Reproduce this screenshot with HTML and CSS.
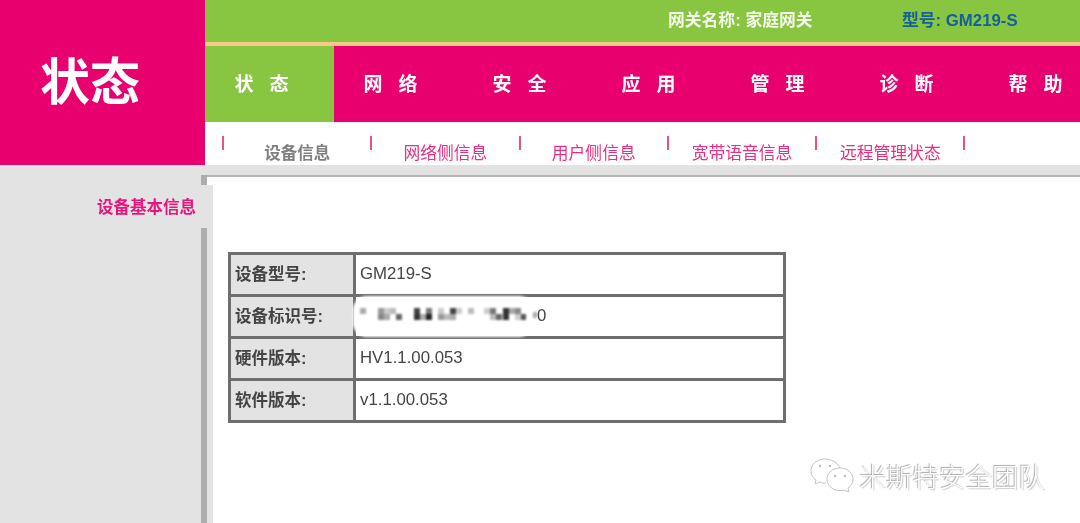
FILE: index.html
```html
<!DOCTYPE html>
<html lang="zh-CN">
<head>
  <meta charset="UTF-8" />
  <title>状态</title>
  <link rel="stylesheet" href="styles.css">
</head>
<body>
  <div class="page">
    <header class="header">
      <div class="logo">状态</div>
      <div class="header-right">
        <div class="topbar">
          <span class="gateway">网关名称: 家庭网关</span>
          <span class="model">型号: GM219-S</span>
        </div>
        <nav class="nav">
          <a class="nav-item active">状态</a>
          <a class="nav-item">网络</a>
          <a class="nav-item">安全</a>
          <a class="nav-item">应用</a>
          <a class="nav-item">管理</a>
          <a class="nav-item">诊断</a>
          <a class="nav-item">帮助</a>
        </nav>
        <div class="subnav">
          <i class="sep"></i><a class="sub-item current">设备信息</a>
          <i class="sep"></i><a class="sub-item">网络侧信息</a>
          <i class="sep"></i><a class="sub-item">用户侧信息</a>
          <i class="sep"></i><a class="sub-item">宽带语音信息</a>
          <i class="sep"></i><a class="sub-item">远程管理状态</a>
          <i class="sep"></i>
        </div>
      </div>
    </header>

    <div class="band"></div>

    <div class="main">
      <aside class="sidebar">
        <a class="side-item">设备基本信息</a>
      </aside>
      <section class="content">
        <table class="info">
          <tr><th>设备型号:</th><td>GM219-S</td></tr>
          <tr>
            <th>设备标识号:</th>
            <td class="masked">
              <span class="blob"></span>
              <svg class="pixels" width="177" height="12" viewBox="0 0 177 12">
                <rect x="0" y="0" width="6" height="6" fill="#aaa"/>
                <rect x="18" y="0" width="6" height="6" fill="#999"/>
                <rect x="18" y="6" width="6" height="6" fill="#888"/>
                <rect x="24" y="0" width="6" height="6" fill="#ccc"/>
                <rect x="24" y="6" width="6" height="6" fill="#aaa"/>
                <rect x="30" y="0" width="6" height="6" fill="#bbb"/>
                <rect x="36" y="6" width="6" height="6" fill="#666"/>
                <rect x="54" y="0" width="6" height="6" fill="#444"/>
                <rect x="54" y="6" width="6" height="6" fill="#333"/>
                <rect x="60" y="6" width="6" height="6" fill="#aaa"/>
                <rect x="66" y="0" width="6" height="6" fill="#777"/>
                <rect x="66" y="6" width="6" height="6" fill="#222"/>
                <rect x="78" y="0" width="6" height="6" fill="#ccc"/>
                <rect x="78" y="6" width="6" height="6" fill="#999"/>
                <rect x="84" y="6" width="6" height="6" fill="#bbb"/>
                <rect x="90" y="0" width="6" height="6" fill="#444"/>
                <rect x="96" y="0" width="6" height="6" fill="#ccc"/>
                <rect x="90" y="6" width="6" height="6" fill="#aaa"/>
                <rect x="108" y="0" width="6" height="6" fill="#bbb"/>
                <rect x="124" y="0" width="6" height="6" fill="#ccc"/>
                <rect x="130" y="0" width="6" height="6" fill="#777"/>
                <rect x="136" y="6" width="6" height="6" fill="#666"/>
                <rect x="130" y="6" width="6" height="6" fill="#bbb"/>
                <rect x="143" y="0" width="6" height="12" fill="#333"/>
                <rect x="149" y="0" width="6" height="6" fill="#aaa"/>
                <rect x="155" y="0" width="6" height="6" fill="#888"/>
                <rect x="155" y="6" width="6" height="6" fill="#ccc"/>
                <rect x="161" y="6" width="5" height="6" fill="#555"/>
                <rect x="173" y="4" width="4" height="6" fill="#aaa"/>
              </svg><span class="last">0</span>
            </td>
          </tr>
          <tr><th>硬件版本:</th><td>HV1.1.00.053</td></tr>
          <tr><th>软件版本:</th><td>v1.1.00.053</td></tr>
        </table>
      </section>
    </div>

    <div class="watermark">
      <svg class="wechat" width="44" height="36" viewBox="0 0 44 36">
        <path d="M15 1C7 1 1 6 1 13c0 4 2 7 5 9l-1 4 5-2c2 1 4 1 6 1" fill="#fff" stroke="#c4c4c4" stroke-width="1"/>
        <path d="M15 1c8 0 14 5 15 10" fill="none" stroke="#c4c4c4" stroke-width="1"/>
        <path d="M30 10c7 0 13 5 13 11 0 4-2 7-5 9l1 4-5-2c-1 .4-3 .6-4 .6-7 0-13-5-13-11.500S23 10 30 10z" fill="#fff" stroke="#c4c4c4" stroke-width="1"/>
        <circle cx="10" cy="8" r="1.200" fill="#bbb"/>
        <circle cx="20" cy="8" r="1.200" fill="#bbb"/>
        <circle cx="25" cy="18" r="1.200" fill="#bbb"/>
        <circle cx="35" cy="18" r="1.200" fill="#bbb"/>
      </svg>
      <span class="wm-text">米斯特安全团队</span>
    </div>
  </div>
</body>
</html>
```

FILE: styles.css
```css
html, body {
  margin: 0;
  height: 100%;
  overflow: hidden;
}

body {
  font-family: "Liberation Sans", "Noto Sans CJK SC", sans-serif;
  background: #fff;
}

.page {
  position: relative;
  display: flex;
  flex-direction: column;
  height: 523px;
  overflow: hidden;
  filter: blur(0.4px);
}

.header {
  display: flex;
  height: 165px;
  flex-shrink: 0;
}

.logo {
  width: 205px;
  flex-shrink: 0;
  box-sizing: border-box;
  padding: 53px 0 0 40px;
  background: #e9006f;
  color: #fff;
  font-size: 50px;
  font-weight: bold;
  line-height: 60px;
}

.header-right {
  flex: 1;
  min-width: 0;
  display: flex;
  flex-direction: column;
}

.topbar {
  display: flex;
  align-items: center;
  height: 42px;
  flex-shrink: 0;
  padding-left: 463px;
  padding-bottom: 4px;
  box-sizing: border-box;
  background: #88c540;
  font-size: 16.800px;
  font-weight: bold;
}

.gateway {
  color: #f4f9ea;
  width: 234px;
  flex-shrink: 0;
}

.model {
  color: #14609a;
}

.nav {
  display: flex;
  height: 76px;
  flex-shrink: 0;
  background: #e9006f;
  border-top: 4px solid #f9c98a;
}

.nav-item {
  width: 129px;
  flex-shrink: 0;
  box-sizing: border-box;
  padding-left: 29.500px;
  color: #fff;
  font-size: 19px;
  font-weight: bold;
  letter-spacing: 16px;
  line-height: 78px;
}

.nav-item.active {
  background: #88c540;
}

.subnav {
  display: flex;
  flex: 1;
  padding-left: 17px;
  background: #fff;
}

.sep {
  width: 2px;
  height: 14px;
  margin-top: 14px;
  flex-shrink: 0;
  background: #ec4c90;
}

.sub-item {
  width: 146.300px;
  flex-shrink: 0;
  padding-top: 20px;
  text-align: center;
  color: #ea2f83;
  font-size: 16.800px;
  line-height: 24px;
}

.sub-item.current {
  padding-top: 19px;
  color: #808080;
  font-weight: bold;
  font-size: 16.500px;
}

.band {
  height: 10px;
  flex-shrink: 0;
  background: #e3e3e3;
}

.main {
  display: flex;
  flex: 1;
  min-height: 0;
}

.sidebar {
  width: 207px;
  flex-shrink: 0;
  box-sizing: border-box;
  padding-top: 10px;
  background: #e3e3e3;
  border-right: 6px solid #adadad;
}

.side-item {
  display: block;
  position: relative;
  z-index: 1;
  height: 43px;
  box-sizing: border-box;
  margin-right: -12px;
  padding: 2px 17px 0 0;
  background: #e3e3e3;
  text-align: right;
  color: #e9147d;
  font-size: 16.500px;
  font-weight: bold;
  line-height: 41px;
}

.content {
  flex: 1;
  min-width: 0;
  padding: 75px 0 0 21px;
  border-top: 2px solid #b4b4b4;
  background: linear-gradient(#e3e3e3, #e3e3e3) 0 8px / 6px 100% no-repeat, #fff;
}

.info {
  width: 558px;
  border-collapse: collapse;
  color: #444;
}

.info th,
.info td {
  height: 42px;
  box-sizing: border-box;
  border: 3px solid #6e6e6e;
  text-align: left;
}

.info th {
  width: 125px;
  padding: 0 0 4px 4px;
  background: #e3e3e3;
  font-size: 16.500px;
  font-weight: bold;
}

.info td {
  padding: 0 0 2px 4px;
  font-size: 16.800px;
}

.masked {
  position: relative;
}

.blob {
  position: absolute;
  left: -3px;
  right: 250px;
  top: -1px;
  bottom: -1px;
  border-radius: 14px;
  background: #fff;
  filter: blur(1px);
}

.pixels {
  position: relative;
  vertical-align: 1px;
  filter: blur(0.9px);
}

.last {
  position: relative;
}

.watermark {
  position: absolute;
  right: 35px;
  top: 458px;
  display: flex;
  align-items: center;
  gap: 6px;
}

.wm-text {
  color: #fff;
  font-family: "Noto Sans CJK SC", sans-serif;
  font-size: 26.500px;
  font-weight: 300;
  line-height: 36px;
  text-shadow: -1px -1px 1px #a8a8a8, 1px 1px 1px #ccc;
}
```
